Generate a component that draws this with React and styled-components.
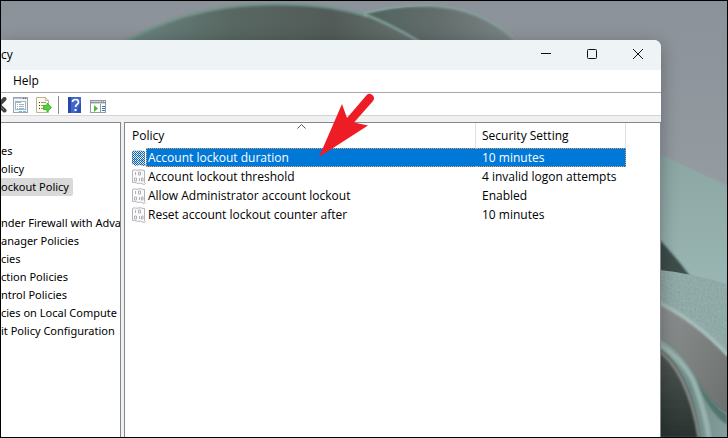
import styled, { createGlobalStyle, css } from "styled-components";

const tree = [
  { id: 1, name: "es" },
  { id: 2, name: "olicy" },
  { id: 3, name: "ockout Policy", selected: true },
  { id: 4, name: "" },
  { id: 5, name: "nder Firewall with Adva" },
  { id: 6, name: "anager Policies" },
  { id: 7, name: "cies" },
  { id: 8, name: "ction Policies" },
  { id: 9, name: "ntrol Policies" },
  { id: 10, name: "cies on Local Compute" },
  { id: 11, name: "it Policy Configuration" },
];

const policies = [
  { name: "Account lockout duration", setting: "10 minutes", selected: true },
  { name: "Account lockout threshold", setting: "4 invalid logon attempts" },
  { name: "Allow Administrator account lockout", setting: "Enabled" },
  { name: "Reset account lockout counter after", setting: "10 minutes" },
];

function App() {
  return (
    <Desktop>
      <GlobalStyle />
      <WallpaperArt />
      <Window>
        <TitleBar>
          <Title>cy</Title>
          <CaptionButton aria-label="Minimize">
            <svg width="10" height="10" viewBox="0 0 10 10">
              <path d="M0 4.5h10" stroke="#111" />
            </svg>
          </CaptionButton>
          <CaptionButton aria-label="Maximize">
            <svg width="10" height="10" viewBox="0 0 10 10">
              <rect x=".5" y=".5" width="9" height="9" rx="1" fill="none" stroke="#111" />
            </svg>
          </CaptionButton>
          <CaptionButton aria-label="Close">
            <svg width="10" height="10" viewBox="0 0 10 10">
              <path d="M0 0l10 10M10 0L0 10" stroke="#111" />
            </svg>
          </CaptionButton>
        </TitleBar>

        <MenuBar>
          <MenuButton>Help</MenuButton>
        </MenuBar>

        <Toolbar>
          <ToolButton $cut aria-label="Delete">
            <DeleteIcon />
          </ToolButton>
          <ToolButton aria-label="Properties">
            <PropertiesIcon />
          </ToolButton>
          <ToolButton aria-label="Export List">
            <ExportIcon />
          </ToolButton>
          <Separator />
          <ToolButton aria-label="Help">
            <HelpIcon />
          </ToolButton>
          <ToolButton aria-label="Show Action Pane">
            <ConsoleIcon />
          </ToolButton>
        </Toolbar>

        <Panes>
          <TreePane>
            {tree.map((item) => (
              <TreeRow key={item.id}>
                <TreeLabel $selected={item.selected}>{item.name}</TreeLabel>
              </TreeRow>
            ))}
          </TreePane>
          <ListPane>
            <Table>
              <colgroup>
                <NameCol />
                <SettingCol />
                <col />
              </colgroup>
              <thead>
                <tr>
                  <Th>
                    Policy
                    <SortArrow width="9" height="5" viewBox="0 0 9 5">
                      <path d="M.5 4.5l4-4 4 4" fill="none" stroke="#555" />
                    </SortArrow>
                  </Th>
                  <Th>Security Setting</Th>
                  <td />
                </tr>
              </thead>
              <tbody>
                {policies.map((policy) => (
                  <tr key={policy.name}>
                    <Td>
                      <NameCell>
                        <PolicyIcon selected={policy.selected} />
                        <PolicyName $selected={policy.selected}>{policy.name}</PolicyName>
                      </NameCell>
                    </Td>
                    <Td>
                      <Setting $selected={policy.selected}>{policy.setting}</Setting>
                    </Td>
                    <td />
                  </tr>
                ))}
              </tbody>
            </Table>
          </ListPane>
        </Panes>
      </Window>

      <Pointer width="56" height="66" viewBox="0 0 56 66">
        <path d="M0 65L23 12l5 14L47.500 3.300a4.300 4.300 0 0 1 6.500 5.600L35 30.500l14 3z" fill="#ee1c24" />
      </Pointer>
    </Desktop>
  );
}

export default App;

function WallpaperArt() {
  return (
    <Wallpaper viewBox="0 0 728 438" preserveAspectRatio="xMaxYMin slice">
      <defs>
        <linearGradient id="sky" x1="0" y1="0" x2="0" y2="1">
          <stop offset="0" stopColor="#8c9299" />
          <stop offset=".45" stopColor="#949ba1" />
        </linearGradient>
        <linearGradient id="petal" x1="0" y1="0" x2="1" y2="0">
          <stop offset="0" stopColor="#6c8580" />
          <stop offset=".35" stopColor="#596863" />
          <stop offset=".7" stopColor="#525b58" />
          <stop offset="1" stopColor="#697470" />
        </linearGradient>
        <linearGradient id="petalBack" x1="0" y1="0" x2="1" y2="0">
          <stop offset="0" stopColor="#4d615b" />
          <stop offset=".5" stopColor="#626d6b" />
          <stop offset="1" stopColor="#7c8586" />
        </linearGradient>
        <linearGradient id="leaf" x1="0" y1="0" x2="0" y2="1">
          <stop offset="0" stopColor="#8ba6a2" />
          <stop offset="1" stopColor="#9cb8b6" />
        </linearGradient>
        <linearGradient id="fold" x1="0" y1="0" x2="1" y2="1">
          <stop offset="0" stopColor="#8e9292" />
          <stop offset="1" stopColor="#696e6c" />
        </linearGradient>
        <linearGradient id="hollow" x1="0" y1="0" x2="0" y2="1">
          <stop offset="0" stopColor="#535a57" />
          <stop offset="1" stopColor="#29322e" />
        </linearGradient>
        <linearGradient id="stem" x1="0" y1="0" x2="1" y2="0">
          <stop offset="0" stopColor="#93aaa7" />
          <stop offset=".5" stopColor="#6f8c87" />
          <stop offset="1" stopColor="#849f9b" />
        </linearGradient>
        <filter id="soft">
          <feGaussianBlur stdDeviation="1" />
        </filter>
        <filter id="grain">
          <feTurbulence type="fractalNoise" baseFrequency=".45" numOctaves="2" />
          <feColorMatrix values="0 0 0 0 .45  0 0 0 0 .56  0 0 0 0 .55  0 0 0 1.200 -.3" />
          <feComposite in2="SourceGraphic" operator="in" />
        </filter>
      </defs>
      <rect width="728" height="438" fill="url(#sky)" />
      <path d="M352 16Q395 4 433 5q50 3 84 36H352z" fill="url(#petalBack)" />
      <path d="M362 13Q398 3 433 5q50 3 84 36" fill="none" stroke="#83a19c" strokeWidth="2" filter="url(#soft)" />
      <path d="M124 41Q190 3 273 3q55-1 94 12 25 11 53 26z" fill="url(#petal)" />
      <path d="M124 41Q190 3 273 3q55-1 94 12" fill="none" stroke="#76938c" strokeWidth="3" filter="url(#soft)" />
      <path d="M364 13q28 11 56 28" fill="none" stroke="#8baba6" strokeWidth="2" filter="url(#soft)" />

      <path d="M655 151l73 34v120h-73z" fill="url(#leaf)" />
      <path d="M655 234q20 20 36 42l-36 2z" fill="#3c4e4a" filter="url(#soft)" />
      <path d="M655 269q38 4 73 15v80l-73-50z" fill="#89a5a2" />
      <path d="M655 269q38 4 73 15v80l-73-50z" fill="#89a5a2" filter="url(#grain)" opacity=".5" />
      <path d="M655 300q42 22 73 56v82h-73z" fill="url(#fold)" />
      <path d="M655 300q42 20 74 55" fill="none" stroke="#a6bcb9" strokeWidth="4" filter="url(#soft)" />
      <path d="M655 336q28 14 42 42 12 24 31 36v24h-73z" fill="url(#stem)" />
      <path d="M696 377q14 25 32 38v10q-20-14-32-48z" fill="#53726d" filter="url(#soft)" />
      <path d="M655 344q36 22 46 94h-46z" fill="url(#hollow)" filter="url(#soft)" />
      <path d="M655 341q34 20 43 50 9 25 12 48" fill="none" stroke="#9ab2ae" strokeWidth="5" filter="url(#soft)" />
      <path d="M655 347q34 22 45 91" fill="none" stroke="#898e8b" strokeWidth="3" filter="url(#soft)" />
    </Wallpaper>
  );
}

function DeleteIcon() {
  return (
    <svg width="16" height="16" viewBox="0 0 16 16">
      <path d="M2 2.500l11.500 11M13.500 2L2 14" stroke="#444" strokeWidth="4" strokeLinecap="round" />
      <path d="M3 3l10 10" stroke="#777" />
    </svg>
  );
}

function PropertiesIcon() {
  return (
    <svg width="16" height="16" viewBox="0 0 16 16">
      <rect x=".5" y=".5" width="14" height="15" fill="#f5f8fb" stroke="#9aa4ac" />
      <path d="M1 1.500h13" stroke="#b7c2cc" />
      <path d="M10 1.500h1m1 0h1" stroke="#58656f" />
      <rect x="2.500" y="4.500" width="10" height="8" fill="#fff" stroke="#a5b3c0" />
      <path d="M3 5.500h5" stroke="#9db5cb" />
      <path d="M4 7.500h1m1 0h5M4 9.500h1m1 0h5M4 11.500h1m1 0h5" stroke="#a3b3c2" />
      <path d="M6 14.500h3m1 0h3" stroke="#54c7ee" />
    </svg>
  );
}

function ExportIcon() {
  return (
    <svg width="16" height="16" viewBox="0 0 16 16">
      <path d="M.5.5h9l3 3v12H.5z" fill="#fffce6" stroke="#b8b39c" />
      <path d="M9.500.5v3h3" fill="#e8dfbb" stroke="#c6bd98" />
      <path d="M3 5.500h1M3 8.500h1M3 11.500h1" stroke="#333" />
      <path d="M5 5.500h5M5 8.500h3M5 11.500h3" stroke="#9295a7" />
      <path d="M7.500 8.500H11V6l4.500 4.500L11 15v-2.500H7.500z" fill="#50d43b" stroke="#48b53a" />
    </svg>
  );
}

function HelpIcon() {
  return (
    <svg width="13" height="16" viewBox="0 0 13 16">
      <rect width="13" height="16" fill="#2848a8" />
      <path d="M3 0h10v16H3z" fill="#4266ca" />
      <path d="M8 16l5-11v11z" fill="#2e50b4" />
      <path d="M4.500 5q0-2.500 3-2.500t3 2.500q0 1.500-1.500 2.500T7.500 10" fill="none" stroke="#fff" strokeWidth="1.700" />
      <path d="M6.500 12h2v2h-2z" fill="#fff" />
    </svg>
  );
}

function ConsoleIcon() {
  return (
    <svg width="16" height="16" viewBox="0 0 16 16">
      <rect x=".5" y="3.500" width="15" height="12" fill="#fff" stroke="#929ca2" />
      <path d="M0 3h16v4H0z" fill="#8b969c" />
      <path d="M1 4.500h10M1 6.500h14" stroke="#cfd6d9" />
      <path d="M12 4.500h1m1 0h1" stroke="#eee" />
      <path d="M10.500 7v8" stroke="#929ca2" />
      <path d="M4 8l4 3.500L4 15z" fill="#4ebc30" />
      <path d="M12 9.500h3m-3 2h3m-3 2h3" stroke="#3975b7" />
    </svg>
  );
}

function PolicyIcon({ selected }) {
  return (
    <svg width="14" height="16" viewBox="0 0 14 16">
      <defs>
        <pattern id="dither" width="2" height="2" patternUnits="userSpaceOnUse">
          <path d="M0 0h1v1H0zM1 1h1v1H1z" fill="#0067b8" />
        </pattern>
      </defs>
      <path
        d="M.5 1.500Q2 .5 3.500 1t3 0 3 0 3 .5v12l1 1q-1 1.500-3 .5l-2-1q-2 1-4 0t-4-.5z"
        fill="#fafafa"
        stroke="#b4b4b4"
      />
      <path
        d="M3.500 3v3M6.500 3h2v3h-2zM2.500 9h2v3h-2zM7.500 9v3M9.500 9h1.500v3H9.500z"
        fill="none"
        stroke="#b0b0bc"
      />
      {selected && <path d="M0 1h13v13l1 1-2 1-4-1-4 1-4-2z" fill="url(#dither)" />}
    </svg>
  );
}

const GlobalStyle = createGlobalStyle`
  * {
    box-sizing: border-box;
  }
  body {
    margin: 0;
    font-family: "Open Sans", "Noto Sans", sans-serif;
    font-size: 12px;
    color: #000;
  }
  button {
    border: 0;
    padding: 0;
    background: none;
    font: inherit;
    color: inherit;
  }
  svg {
    display: block;
    flex: none;
  }
`;

const Desktop = styled.div`
  position: relative;
  display: flex;
  flex-direction: column;
  min-height: 100vh;
  border: 1px solid #000;
  padding: 39px 66px 0 0;
  overflow: hidden;
`;

const Wallpaper = styled.svg`
  position: absolute;
  inset: 0;
  width: 100%;
  height: 100%;
`;

const Window = styled.main`
  position: relative;
  flex: 1;
  display: flex;
  flex-direction: column;
  background: #f0f0f0;
  border-top-right-radius: 7px;
  box-shadow: 0 4px 18px rgba(0, 0, 0, 0.3);
`;

const TitleBar = styled.header`
  display: flex;
  height: 30px;
  background: #eef4f6;
  border-top-right-radius: 7px;
`;

const Title = styled.span`
  flex: 1;
  line-height: 30px;
`;

const CaptionButton = styled.button`
  display: flex;
  align-items: center;
  justify-content: center;
  width: 46px;
  height: 28px;
`;

const MenuBar = styled.nav`
  height: 23px;
  background: #fff;
  border-bottom: 1px solid #a9a9a9;
`;

const MenuButton = styled.button`
  padding: 0 12px;
  line-height: 22px;
`;

const Toolbar = styled.div`
  display: flex;
  align-items: flex-end;
  height: 23px;
  background: #fff;
  border-bottom: 1px solid #d5d5d5;
`;

const ToolButton = styled.button`
  display: flex;
  align-items: center;
  justify-content: ${(props) => (props.$cut ? "flex-end" : "center")};
  width: ${(props) => (props.$cut ? "8px" : "23px")};
  height: 20px;
  padding-right: ${(props) => (props.$cut ? "2px" : "0")};
  overflow: hidden;
`;

const Separator = styled.div`
  width: 1px;
  height: 18px;
  margin: 0 4px 1px 3px;
  background: #8a8a8a;
`;

const Panes = styled.div`
  flex: 1;
  display: flex;
  gap: 3px;
  padding-top: 6px;
`;

const TreePane = styled.ul`
  width: 120px;
  margin: 0;
  padding: 19px 0 0;
  list-style: none;
  font-family: "Noto Sans", "Open Sans", sans-serif;
  font-size: 11px;
  background: #fff;
  border: solid #828790;
  border-width: 1px 1px 0 0;
  overflow: hidden;
`;

const TreeRow = styled.li`
  height: 18px;
  line-height: 18px;
  white-space: nowrap;
`;

const TreeLabel = styled.span`
  display: inline-block;
  padding-right: 4px;
  border-radius: 0 2px 2px 0;
  background: ${(props) => (props.$selected ? "#d9d9d9" : "none")};
`;

const ListPane = styled.section`
  flex: 1;
  background: #fff;
  border: solid #828790;
  border-width: 1px 1px 0 1px;
`;

const Table = styled.table`
  width: 100%;
  table-layout: fixed;
  border-collapse: separate;
  border-spacing: 0;

  td {
    padding: 0;
  }
`;

const NameCol = styled.col`
  width: 351px;
`;

const SettingCol = styled.col`
  width: 150px;
`;

const Th = styled.th`
  position: relative;
  height: 25px;
  padding: 0 6px;
  border-right: 1px solid #e0e0e0;
  font-weight: normal;
  text-align: left;

  &:first-child {
    padding-left: 7px;
  }
`;

const SortArrow = styled.svg`
  position: absolute;
  top: 1px;
  left: 50%;
  margin-left: -3px;
`;

const Td = styled.td`
  height: 19px;
`;

const NameCell = styled.div`
  display: flex;
  align-items: center;
  padding-left: 7px;
`;

const selection = css`
  color: #fff;
  background: #0078d7;
  border-color: #e2a064;
`;

const PolicyName = styled.span`
  flex: 1;
  padding-left: 1px;
  border: 1px dotted transparent;
  border-right: 0;
  line-height: 17px;
  ${(props) => props.$selected && selection}
`;

const Setting = styled.div`
  padding-left: 6px;
  border: 1px dotted transparent;
  border-left: 0;
  line-height: 17px;
  ${(props) => props.$selected && selection}
`;

const Pointer = styled.svg`
  position: absolute;
  top: 91px;
  left: 318px;
`;
